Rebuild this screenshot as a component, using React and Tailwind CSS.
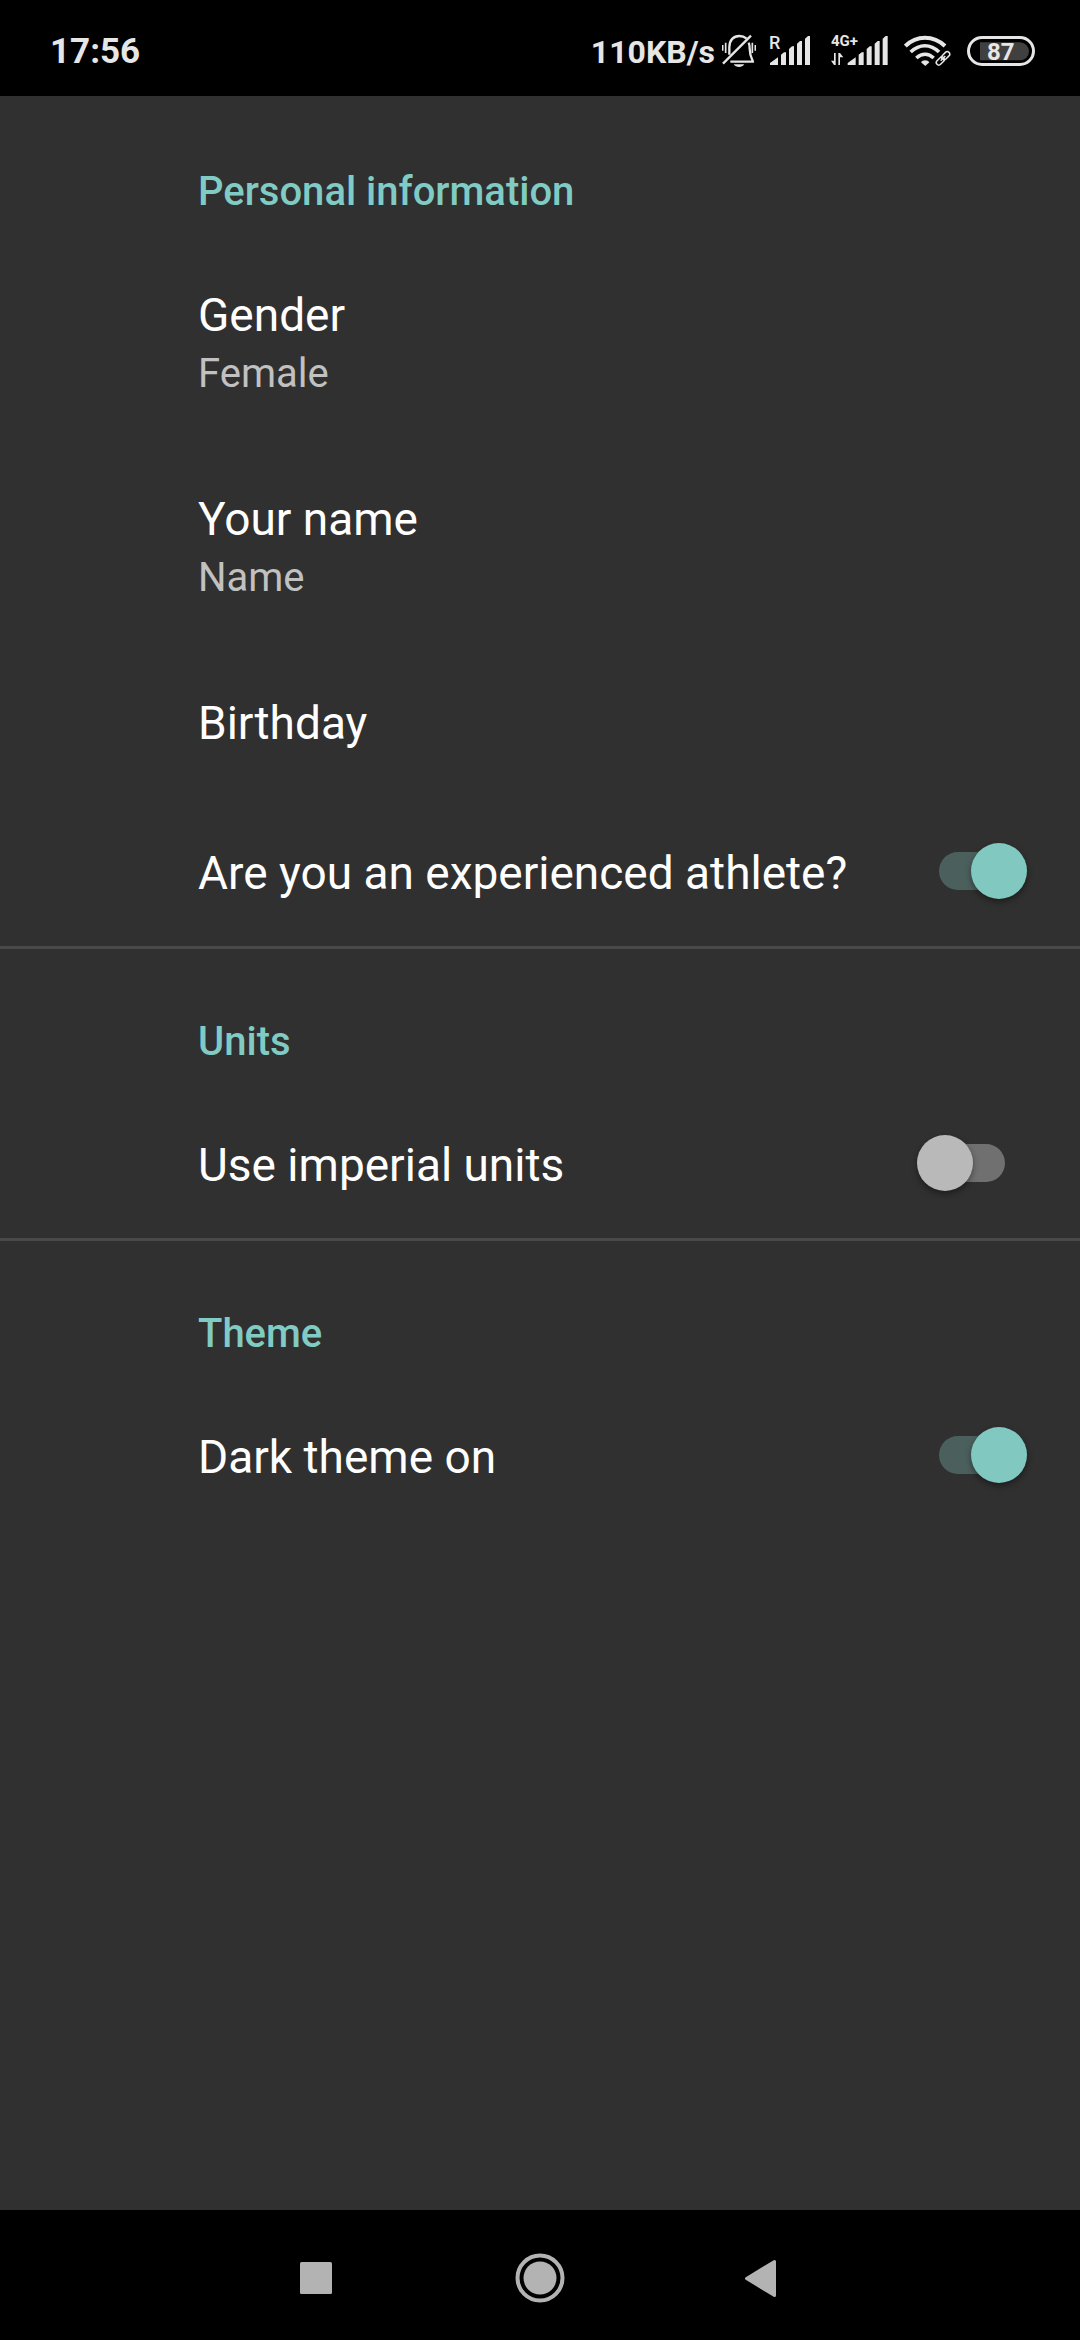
import React from "react";

function BellOffIcon() {
  return (
    <svg width="34" height="44" viewBox="426 60 102 132" fill="none" stroke="#e6e6e6" strokeWidth="7" aria-hidden="true">
      <path d="M448 134 V112 C448 90 461 78 478 78 C487 78 494 81 500 86" />
      <path d="M506 98 C508 103 509 108 509 116 C509 134 513 143 519 155 H451" strokeLinejoin="round" />
      <path d="M429 161 L513 77" strokeWidth="7" />
      <path d="M461 163 H493 C489 169 484 171 477 171 C470 171 465 169 461 163 Z" fill="#e6e6e6" stroke="none" />
      <path d="M428 105 V122 M437 98 V129 M517 98 V129 M526 105 V122" strokeWidth="5" />
    </svg>
  );
}

function RoamingSignalIcon() {
  return (
    <svg width="40" height="44" viewBox="570 60 120 132" fill="#e6e6e6" className="overflow-visible" role="img" aria-label="Roaming signal">
      <text x="567" y="117" fontFamily="Roboto, sans-serif" fontSize="54" fontWeight="500">R</text>
      <path d="M570 165 V159 L594 142 V165 Z" />
      <path d="M603 165 V134 L612 127 H618 V165 Z" />
      <path d="M627 165 V117 L636 109 H642 V165 Z" />
      <path d="M651 165 V101 L660 93 H666 V165 Z" />
      <path d="M675 165 V86 L684 78 H690 V165 Z" />
    </svg>
  );
}

function MobileSignalIcon() {
  return (
    <svg width="57" height="44" viewBox="34 60 171 132" fill="#e6e6e6" className="overflow-visible" role="img" aria-label="4G+ signal">
      <text x="34" y="108" fontFamily="Roboto, sans-serif" fontSize="45" fontWeight="700">4G+</text>
      <path d="M43 129 H48 V165 H43 L34 152 H43 Z" />
      <path d="M56 129 H61 L71 142 H61 V165 H56 Z" />
      <path d="M84 165 V159 L108 142 V165 Z" />
      <path d="M117 165 V134 L126 127 H132 V165 Z" />
      <path d="M141 165 V117 L150 109 H156 V165 Z" />
      <path d="M165 165 V101 L174 93 H180 V165 Z" />
      <path d="M189 165 V86 L198 78 H204 V165 Z" />
    </svg>
  );
}

function WifiIcon() {
  return (
    <svg width="47" height="44" viewBox="252 60 141 132" fill="none" stroke="#e6e6e6" role="img" aria-label="Wi-Fi">
      <path d="M256 108 C290 75 340 75 375 108" strokeWidth="12" />
      <path d="M272 126 C299 101 331 101 357 126" strokeWidth="11" />
      <path d="M289 144 C306 129 325 129 341 144" strokeWidth="11" />
      <path d="M303 157 C307 149 324 149 328 157 L316 168 Z" fill="#e6e6e6" stroke="none" />
      <g strokeWidth="4.5">
        <rect x="-14" y="-7.5" width="28" height="15" rx="7.5" transform="translate(377 137) rotate(-45)" />
        <rect x="-14" y="-7.5" width="28" height="15" rx="7.5" transform="translate(361 153) rotate(-45)" />
        <path d="M362 152 L376 138" />
      </g>
    </svg>
  );
}

function BatteryIcon() {
  return (
    <svg width="68" height="44" viewBox="441 60 204 132" role="img" aria-label="Battery 87%">
      <rect x="445.5" y="82.5" width="195" height="81" rx="40.5" fill="none" stroke="#e6e6e6" strokeWidth="9" />
      <path d="M480 97 H600 A27 27 0 0 1 600 151 H480 Z" fill="#404040" />
      <text x="542" y="150" textAnchor="middle" fontFamily="Roboto, sans-serif" fontSize="72" fontWeight="700" fill="#e6e6e6">87</text>
    </svg>
  );
}

function StatusBar() {
  return (
    <header className="flex h-24 items-center bg-black pt-2 pr-[45px] pl-[50px] text-[35px] font-bold text-[#e6e6e6]">
      <time className="mr-auto">17:56</time>
      <span className="mr-[7px] text-[32px]">110KB/s</span>
      <BellOffIcon />
      <div className="ml-[14px] flex items-center">
        <RoamingSignalIcon />
      </div>
      <div className="ml-[21px] flex items-center gap-4">
        <MobileSignalIcon />
        <WifiIcon />
        <BatteryIcon />
      </div>
    </header>
  );
}

function Category({ title, divided, children }) {
  return (
    <section className="relative">
      {divided && <hr className="absolute inset-x-0 top-0 h-[3px] border-0 bg-[#494949]" />}
      <h2 className="pt-[68px] pr-[53px] pb-[18px] pl-[198px] text-[40px] leading-[56px] font-medium text-[#80cbc4]">
        {title}
      </h2>
      {children}
    </section>
  );
}

function Preference({ title, summary }) {
  return (
    <button type="button" className="block w-full pt-[46px] pr-[53px] pb-[42px] pl-[198px] text-left">
      <span className="block text-[46px] leading-[62px] text-white">{title}</span>
      {summary && <span className="-mb-0.5 block text-[40px] leading-[56px] text-[#c1c1c1]">{summary}</span>}
    </button>
  );
}

function SwitchPreference({ id, title, defaultChecked }) {
  return (
    <div className="flex items-center pr-[75px] pl-[198px]">
      <label htmlFor={id} className="flex-1 pt-[46px] pb-[42px] text-[46px] leading-[62px] text-white">
        {title}
      </label>
      <input
        id={id}
        type="checkbox"
        role="switch"
        defaultChecked={defaultChecked}
        className="relative h-[38px] w-[66px] shrink-0 appearance-none rounded-full bg-[#707070] before:absolute before:top-[-9px] before:left-[-22px] before:size-14 before:rounded-full before:bg-[#b9b9b9] before:shadow-[0_3px_6px_rgba(0,0,0,0.4)] checked:bg-[#4b605d] checked:before:left-8 checked:before:bg-[#80c8c0]"
      />
    </div>
  );
}

function NavigationBar() {
  return (
    <nav className="flex h-[130px] items-center justify-center bg-black pt-[6px]">
      <button type="button" aria-label="Recent apps" className="flex w-56 justify-center">
        <svg width="50" height="50" viewBox="0 0 50 50" fill="#b3b3b3">
          <rect x="9" y="9" width="32" height="32" rx="1.5" />
        </svg>
      </button>
      <button type="button" aria-label="Home" className="flex w-56 justify-center">
        <svg width="50" height="50" viewBox="0 0 50 50" fill="#b3b3b3">
          <circle cx="25" cy="25" r="22.5" fill="none" stroke="#b3b3b3" strokeWidth="4" />
          <circle cx="25" cy="25" r="16.5" />
        </svg>
      </button>
      <button type="button" aria-label="Back" className="flex w-56 justify-center">
        <svg width="50" height="50" viewBox="0 0 50 50" fill="#b3b3b3" stroke="#b3b3b3" strokeWidth="3" strokeLinejoin="round">
          <path d="M7.5 25.5 L35.5 8.5 V42.5 Z" />
        </svg>
      </button>
    </nav>
  );
}

export default function App() {
  return (
    <div className="flex min-h-screen flex-col bg-[#303030] font-[Roboto,sans-serif]">
      <StatusBar />
      <main className="flex-1">
        <Category title="Personal information">
          <Preference title="Gender" summary="Female" />
          <Preference title="Your name" summary="Name" />
          <Preference title="Birthday" />
          <SwitchPreference id="athlete" title="Are you an experienced athlete?" defaultChecked />
        </Category>
        <Category title="Units" divided>
          <SwitchPreference id="imperial" title="Use imperial units" />
        </Category>
        <Category title="Theme" divided>
          <SwitchPreference id="dark" title="Dark theme on" defaultChecked />
        </Category>
      </main>
      <NavigationBar />
    </div>
  );
}
